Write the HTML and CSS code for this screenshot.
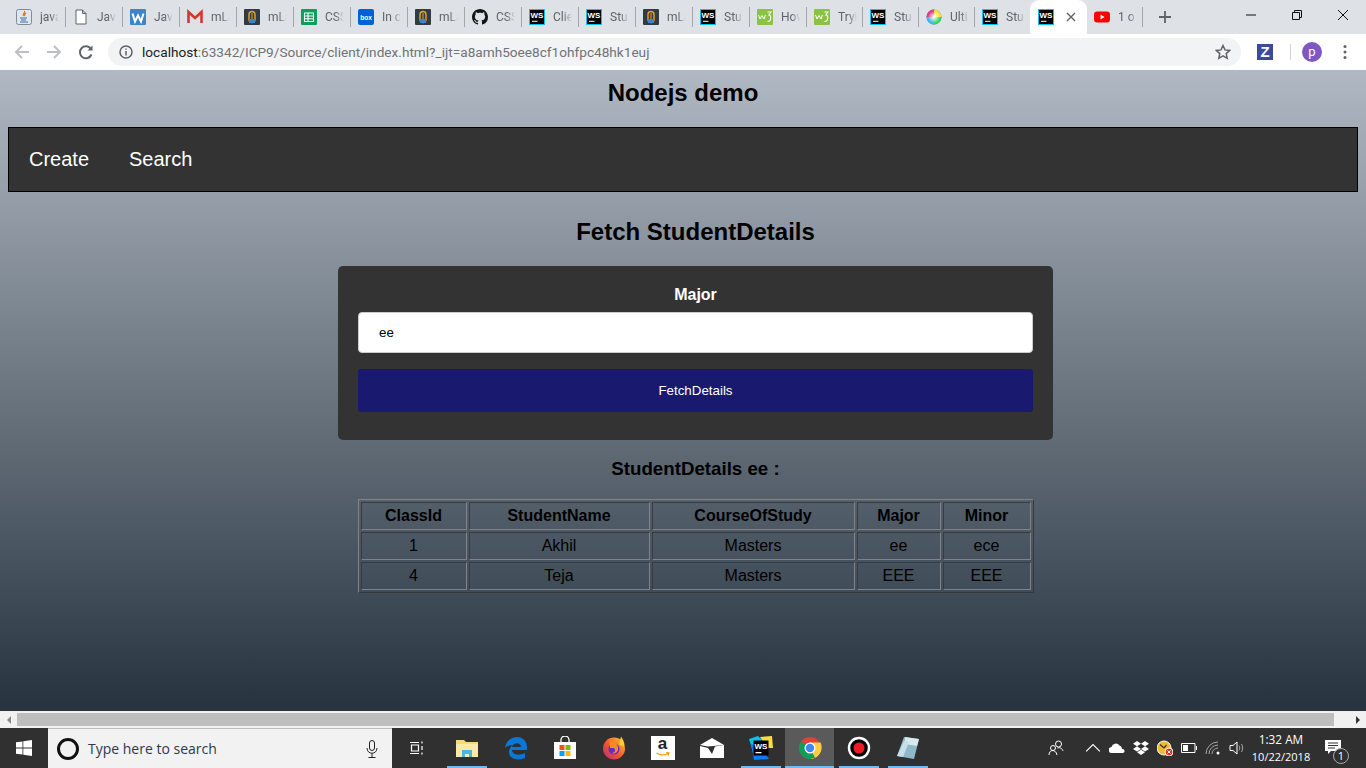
FILE: index.html
```html
<!DOCTYPE html>
<html lang="en">
<head>
<meta charset="utf-8">
<title>Nodejs demo</title>
<link rel="stylesheet" href="styles.css">
</head>
<body>
<svg class="defs" width="0" height="0" aria-hidden="true">
  <symbol id="i-java" viewBox="0 0 16 16"><rect x=".5" y=".5" width="15" height="15" rx="2" fill="#dfe6ee" stroke="#7d8b9a"/><path d="M8.5 2c1 2-2.5 3-1 5M10 4c-1.500 1-2 2-1 3" fill="none" stroke="#e2661a" stroke-width="1.100"/><path d="M4 9h7M5 11h5M4 13h8" stroke="#3f6fa8" stroke-width="1"/></symbol>
  <symbol id="i-doc" viewBox="0 0 16 16"><path d="M3 1h6.500L13 4.500V15H3z M9.500 1v3.500H13" fill="#fff" stroke="#5f6368" stroke-width="1"/></symbol>
  <symbol id="i-w" viewBox="0 0 16 16"><rect width="16" height="16" rx="1" fill="#3d85c6"/><path d="M2.500 4.500l2.500 8 3-6 3 6 2.500-8" fill="none" stroke="#fff" stroke-width="2"/></symbol>
  <symbol id="i-gmail" viewBox="0 0 16 16"><path d="M1.500 14V3l6.500 6 6.500-6v11" fill="none" stroke="#d2392e" stroke-width="2.600"/></symbol>
  <symbol id="i-mlab" viewBox="0 0 16 16"><rect width="16" height="16" rx="1" fill="#323b43"/><rect x="5" y="2.500" width="6" height="11" rx="3" fill="none" stroke="#e6a820" stroke-width="1.400"/><rect x="5" y="10" width="6" height="4" fill="#3f83c9"/><path d="M8 4v6" stroke="#e6a820"/></symbol>
  <symbol id="i-sheets" viewBox="0 0 16 16"><rect width="16" height="16" rx="1" fill="#0f9d58"/><path d="M3.500 4h9v8.500h-9zM3.500 7h9M3.500 9.800h9M7 4v8.500" fill="none" stroke="#fff" stroke-width="1.100"/></symbol>
  <symbol id="i-box" viewBox="0 0 16 16"><rect width="16" height="16" rx="2" fill="#0061d5"/><text x="8" y="11" text-anchor="middle" class="t-box">box</text></symbol>
  <symbol id="i-gh" viewBox="0 0 16 16"><path fill="#161514" d="M8 0C3.580 0 0 3.580 0 8c0 3.540 2.290 6.530 5.470 7.590.4.070.55-.17.55-.38 0-.19-.01-.82-.01-1.490-2.010.37-2.530-.49-2.690-.94-.09-.23-.48-.94-.82-1.130-.28-.15-.68-.52-.01-.53.63-.01 1.080.58 1.230.82.720 1.210 1.870.87 2.330.66.070-.52.280-.87.510-1.070-1.780-.2-3.640-.89-3.640-3.950 0-.87.310-1.590.820-2.150-.08-.2-.36-1.020.08-2.120 0 0 .67-.21 2.200.82.640-.18 1.320-.27 2-.27s1.360.09 2 .27c1.530-1.040 2.200-.82 2.200-.82.44 1.100.16 1.920.08 2.120.51.560.82 1.270.82 2.150 0 3.070-1.870 3.750-3.650 3.950.29.25.54.73.54 1.480 0 1.070-.01 1.930-.01 2.200 0 .21.15.46.55.38A8.010 8.010 0 0 0 16 8c0-4.420-3.580-8-8-8z"/></symbol>
  <symbol id="i-ws" viewBox="0 0 16 16"><rect width="16" height="16" fill="#07c3f2"/><rect x="1" y="1" width="14" height="14" fill="#000"/><text x="8" y="8.500" text-anchor="middle" class="t-ws">WS</text><rect x="3" y="11.800" width="5.500" height="1" fill="#fff"/></symbol>
  <symbol id="i-w3" viewBox="0 0 16 16"><rect width="16" height="16" rx="1" fill="#8ac343"/><path d="M1.500 6l1.500 4 2-3.500 2 3.500 1.500-4" fill="none" stroke="#fff" stroke-width="1"/><path d="M10.500 3h3.500l-2 3c2.500 0 2.500 7-1.500 6.500" fill="none" stroke="#fff" stroke-width="1.100"/></symbol>
  <symbol id="i-wheel" viewBox="0 0 16 16"><defs><radialGradient id="gw"><stop offset="0" stop-color="#fff"/><stop offset="1" stop-color="#fff" stop-opacity="0"/></radialGradient></defs><circle cx="8" cy="8" r="7.500" fill="#46a"/><path d="M8 8V.5A7.500 7.500 0 0 1 15.500 8z" fill="#f7e03c"/><path d="M8 8h7.500A7.500 7.500 0 0 1 8 15.500z" fill="#3bd46b"/><path d="M8 8v7.500A7.500 7.500 0 0 1 .5 8z" fill="#43b7e8"/><path d="M8 8H.5A7.500 7.500 0 0 1 8 .5z" fill="#d8408f"/><circle cx="8" cy="8" r="6" fill="url(#gw)"/></symbol>
  <symbol id="i-yt" viewBox="0 0 16 16"><rect y="2.500" width="16" height="11" rx="3" fill="#f00"/><path d="M6.500 5.500l4 2.500-4 2.500z" fill="#fff"/></symbol>
</svg>

<header class="tabstrip">
  <div class="tab"><svg class="fav"><use href="#i-java"/></svg><span class="tab-t">java</span></div>
  <div class="tab"><svg class="fav"><use href="#i-doc"/></svg><span class="tab-t">Java</span></div>
  <div class="tab"><svg class="fav"><use href="#i-w"/></svg><span class="tab-t">Java</span></div>
  <div class="tab"><svg class="fav"><use href="#i-gmail"/></svg><span class="tab-t">mLa</span></div>
  <div class="tab"><svg class="fav"><use href="#i-mlab"/></svg><span class="tab-t">mLa</span></div>
  <div class="tab"><svg class="fav"><use href="#i-sheets"/></svg><span class="tab-t">CSS</span></div>
  <div class="tab"><svg class="fav"><use href="#i-box"/></svg><span class="tab-t">In c</span></div>
  <div class="tab"><svg class="fav"><use href="#i-mlab"/></svg><span class="tab-t">mLa</span></div>
  <div class="tab"><svg class="fav"><use href="#i-gh"/></svg><span class="tab-t">CSS</span></div>
  <div class="tab"><svg class="fav"><use href="#i-ws"/></svg><span class="tab-t">Clie</span></div>
  <div class="tab"><svg class="fav"><use href="#i-ws"/></svg><span class="tab-t">Stu</span></div>
  <div class="tab"><svg class="fav"><use href="#i-mlab"/></svg><span class="tab-t">mLa</span></div>
  <div class="tab"><svg class="fav"><use href="#i-ws"/></svg><span class="tab-t">Stu</span></div>
  <div class="tab"><svg class="fav"><use href="#i-w3"/></svg><span class="tab-t">How</span></div>
  <div class="tab tab-n"><svg class="fav"><use href="#i-w3"/></svg><span class="tab-t">Tryi</span></div>
  <div class="tab tab-n"><svg class="fav"><use href="#i-ws"/></svg><span class="tab-t">Stu</span></div>
  <div class="tab tab-n"><svg class="fav"><use href="#i-wheel"/></svg><span class="tab-t">Ulti</span></div>
  <div class="tab tab-n tab-pre"><svg class="fav"><use href="#i-ws"/></svg><span class="tab-t">Stu</span></div>
  <div class="tab tab-active"><svg class="fav"><use href="#i-ws"/></svg>
    <svg class="tab-x" viewBox="0 0 10 10"><path d="M1 1l8 8M9 1l-8 8"/></svg></div>
  <div class="tab tab-n"><svg class="fav"><use href="#i-yt"/></svg><span class="tab-t">1 o</span></div>
  <svg class="newtab" viewBox="0 0 12 12"><path d="M6 0v12M0 6h12"/></svg>
  <div class="winctl">
    <div class="winbtn"><svg viewBox="0 0 10 10"><path d="M0 5h10"/></svg></div>
    <div class="winbtn"><svg viewBox="0 0 10 10"><path d="M.5 2.500h7v7h-7zM2.500 2.500v-2h7v7h-2"/></svg></div>
    <div class="winbtn"><svg viewBox="0 0 10 10"><path d="M0 0l10 10M10 0L0 10"/></svg></div>
  </div>
</header>

<div class="toolbar">
  <svg class="navi navi-off" viewBox="0 0 16 16"><path d="M15 8H2M8 2L2 8l6 6"/></svg>
  <svg class="navi navi-off" viewBox="0 0 16 16"><path d="M1 8h13M8 2l6 6-6 6"/></svg>
  <svg class="navi navi-on" viewBox="0 0 16 16"><path d="M13.500 10.500A6 6 0 1 1 13 5"/><path class="fill" d="M14.500 1.500v5h-5z"/></svg>
  <div class="omnibox">
    <svg class="info" viewBox="0 0 14 14"><circle cx="7" cy="7" r="6"/><path d="M7 6v4.500M7 3.500v1.300"/></svg>
    <span class="url"><span class="url-host">localhost</span>:63342/ICP9/Source/client/index.html?_ijt=a8amh5oee8cf1ohfpc48hk1euj</span>
    <svg class="star" viewBox="0 0 16 16"><path d="M8 1.500l2 4.400 4.700.5-3.500 3.200 1 4.700L8 11.900l-4.200 2.400 1-4.700L1.300 6.400 6 5.900z"/></svg>
  </div>
  <div class="ext-z">Z</div>
  <div class="tool-sep"></div>
  <div class="avatar">P</div>
  <svg class="kebab" viewBox="0 0 4 16"><circle cx="2" cy="2.500" r="1.500"/><circle cx="2" cy="8" r="1.500"/><circle cx="2" cy="13.500" r="1.500"/></svg>
</div>

<main class="page">
  <h1 class="site-title">Nodejs demo</h1>
  <nav class="nav"><a class="nav-link">Create</a><a class="nav-link">Search</a></nav>
  <section class="content">
    <h2 class="fetch-title">Fetch StudentDetails</h2>
    <form class="card">
      <label class="card-label" for="major">Major</label>
      <input class="card-input" id="major" type="text" value="ee">
      <button class="card-btn" type="button">FetchDetails</button>
    </form>
    <h3 class="result-title">StudentDetails ee :</h3>
    <table class="results">
      <colgroup><col class="c1"><col class="c2"><col class="c3"><col class="c4"><col class="c5"></colgroup>
      <thead>
        <tr><th>ClassId</th><th>StudentName</th><th>CourseOfStudy</th><th>Major</th><th>Minor</th></tr>
      </thead>
      <tbody>
        <tr><td>1</td><td>Akhil</td><td>Masters</td><td>ee</td><td>ece</td></tr>
        <tr><td>4</td><td>Teja</td><td>Masters</td><td>EEE</td><td>EEE</td></tr>
      </tbody>
    </table>
  </section>
</main>

<div class="hscroll">
  <div class="sb-btn"><span class="arrow-l"></span></div>
  <div class="sb-thumb"></div>
  <div class="sb-btn"><span class="arrow-r"></span></div>
</div>

<footer class="taskbar">
  <div class="start"><svg viewBox="0 0 16 16" class="win"><path d="M0 2.300l6.500-.9v6.200H0zM7.300 1.300L16 0v7.600H7.300zM0 8.400h6.500v6.200L0 13.700zM7.300 8.400H16V16l-8.700-1.300z"/></svg></div>
  <div class="searchbox">
    <span class="cortana"></span>
    <span class="search-t">Type here to search</span>
    <svg class="mic" viewBox="0 0 12 18"><rect x="3.500" y=".5" width="5" height="10" rx="2.500"/><path d="M1 8c0 7 10 7 10 0M6 13.500v3.500M2.500 17.500h7"/></svg>
  </div>
  <div class="taskview"><svg viewBox="0 0 16 16"><path d="M1 2.500h9M1 13.500h9M2.500 5h7v6h-7zM13 1.500v2M13 6v4M13 12.500v2"/></svg></div>

  <div class="task-i run"><svg viewBox="0 0 24 24"><path d="M1 4h8l2 2h12v15H1z" fill="#f6d97a"/><path d="M1 8h22v13H1z" fill="#fbe9a9"/><path d="M7 14h10v7h-3v-3h-4v3H7z" fill="#4db4e6"/></svg></div>
  <div class="task-i"><svg viewBox="0 0 24 24"><path d="M1 12C2 4 8 1 13 1c6 0 10 4 10 11v2H8c0 5 8 6 13 3v5c-7 3-16 1-16-6 0-3 2-6 4-7-3 0-6 1-8 3zm7-1h9c0-5-8-5-9 0z" fill="#0a78d7"/></svg></div>
  <div class="task-i"><svg viewBox="0 0 24 24"><path d="M8 6V4a4 4 0 0 1 8 0v2" fill="none" stroke="#fff" stroke-width="1.300"/><path d="M1 6h22v17H1z" fill="#fff"/><rect x="6.500" y="9" width="5" height="5" fill="#f25022"/><rect x="12.500" y="9" width="5" height="5" fill="#7fba00"/><rect x="6.500" y="15" width="5" height="5" fill="#00a4ef"/><rect x="12.500" y="15" width="5" height="5" fill="#ffb900"/></svg></div>
  <div class="task-i"><svg viewBox="0 0 24 24"><defs><linearGradient id="ff" x1="1" y1="0" x2="0" y2="1"><stop offset="0" stop-color="#ffcb2d"/><stop offset=".55" stop-color="#f5552a"/><stop offset="1" stop-color="#b3268c"/></linearGradient></defs><circle cx="12" cy="12.500" r="11" fill="url(#ff)"/><path d="M19 .5c2 3 4 6 3 10l-5-2z" fill="#ffcb2d"/><circle cx="12" cy="13" r="5.500" fill="#6a2bc4"/><path d="M8 6c4-1 9 2 8 8-1 3-4 4-6 3 3 0 4-3 2-5H8z" fill="#f98b23"/></svg></div>
  <div class="task-i"><div class="amazon"><span class="amazon-a">a</span><svg viewBox="0 0 20 6" class="smile"><path d="M2 1c4 3 10 3 15 .5M14 .5l3.500.5-1 3"/></svg></div></div>
  <div class="task-i"><svg viewBox="0 0 24 20"><path d="M0 7L12 0l12 7-16 1.500z" fill="#fff"/><path d="M0 8l8 2 4 6 3-7.500 9-1.500v13H0z" fill="#fff"/></svg></div>
  <div class="task-i run"><svg viewBox="0 0 24 24"><path d="M0 3l9-3 4 4-9 12z" fill="#07c3f2"/><path d="M11 1l12-1 1 12-6 0z" fill="#f7e03c"/><path d="M2 8l10 4 8 11-15 1z" fill="#087cfa"/><rect x="4.500" y="4.500" width="15" height="15" fill="#000"/><text x="12" y="12.500" text-anchor="middle" class="t-wsb">WS</text><rect x="6.500" y="16" width="6" height="1.300" fill="#fff"/></svg></div>
  <div class="task-i run task-active"><svg viewBox="0 0 24 24"><circle cx="12" cy="12" r="11" fill="#db4437"/><path d="M12 12L2.500 17.500A11 11 0 0 1 3 5.500z" fill="#0f9d58"/><path d="M12 12l0 11A11 11 0 0 1 2.500 17.500z" fill="#0f9d58"/><path d="M12 12h11A11 11 0 0 1 12 23z" fill="#ffcd40"/><path d="M12 12L6.500 21.500 12 23l5.500-1.500z" fill="#0f9d58"/><path d="M12 6.500h10.500a11 11 0 0 1-5.500 15L12 12z" fill="#ffcd40"/><circle cx="12" cy="12" r="5.500" fill="#fff"/><circle cx="12" cy="12" r="4.200" fill="#4285f4"/></svg></div>
  <div class="task-i run"><svg viewBox="0 0 24 24"><circle cx="12" cy="12" r="10" fill="#000" stroke="#fff" stroke-width="2.400"/><circle cx="12" cy="12" r="5.500" fill="#ed1c24"/></svg></div>
  <div class="task-i run"><svg viewBox="0 0 24 24"><path d="M8 1l15 2-5 20L1 20z" fill="#8fb9c9"/><path d="M9 1l14 2-2 7-12-2z" fill="#d7e8ee"/><path d="M1 20L8 5l5 1-6 15z" fill="#c6dfe9"/></svg></div>

  <div class="tray">
    <div class="people"><svg viewBox="0 0 16 16"><circle cx="10.500" cy="4" r="3"/><circle cx="5" cy="8" r="2.500"/><path d="M1 15c0-6 7-6 8 0M9.500 8c3-1 5 1 5.500 3"/></svg></div>
    <div class="tray-i"><svg viewBox="0 0 14 8"><path d="M1 7l6-6 6 6"/></svg></div>
    <div class="tray-i"><svg viewBox="0 0 16 10"><path class="fill" d="M3 10a3 3 0 0 1-.5-6 4.500 4.500 0 0 1 8-1.500A3.500 3.500 0 0 1 13 6a2 2 0 0 1 1 4z"/></svg></div>
    <div class="tray-i"><svg viewBox="0 0 16 14"><path class="fill" d="M4 0L0 2.700l4 2.600L8 2.700zM12 0L8 2.700l4 2.600 4-2.600zM0 7.900l4 2.600L8 7.900 4 5.300zM12 5.300L8 7.900l4 2.600 4-2.600zM4 11.300L8 14l4-2.700-4-2.500z"/></svg></div>
    <div class="tray-i"><svg viewBox="0 0 16 16"><circle cx="7" cy="8" r="7" fill="#f2b933"/><path d="M7 8L3 4.500M7 8l2.500-3" stroke="#333" stroke-width="1.200"/><circle cx="12" cy="12" r="4" fill="#d5321f"/><path d="M10.500 10.500l3 3M13.500 10.500l-3 3" stroke="#fff"/></svg></div>
    <div class="tray-i"><svg viewBox="0 0 16 10"><path d="M.5.500h13.500v9H.5zM15.500 3v4"/><rect class="fill" x="2" y="2" width="5" height="6"/></svg></div>
    <div class="tray-i"><svg viewBox="0 0 16 16"><path d="M1 14a12 12 0 0 1 12-12M4 14a9 9 0 0 1 9-9M7 14a6 6 0 0 1 6-6" class="dim"/><circle class="fill" cx="13" cy="13" r="1.500"/></svg></div>
    <div class="tray-i"><svg viewBox="0 0 16 14"><path d="M1 4.500h3L8 1v12L4 9.500H1z"/><path d="M10 4.500c1 1.500 1 3.500 0 5M12.500 3c1.500 2.500 1.500 5.500 0 8" class="dim"/></svg></div>
    <div class="clock"><span class="clock-t">1:32 AM</span><span class="clock-d">10/22/2018</span></div>
    <div class="notif"><svg viewBox="0 0 16 14"><path class="fill" d="M0 0h16v11H6l-3 3v-3H0z"/><path class="ink" d="M3 3h10M3 5.500h10M3 8h7"/></svg><span class="notif-n">1</span></div>
  </div>
</footer>
</body>
</html>
```

FILE: styles.css
```css
* { box-sizing: border-box; }
html, body { margin: 0; padding: 0; }
body {
  width: 1366px; height: 768px; overflow: hidden;
  display: flex; flex-direction: column;
  font-family: "Liberation Sans", Arial, sans-serif;
}
.defs { position: absolute; }
.t-box { font: bold 6.500px "Liberation Sans", sans-serif; fill: #fff; }
.t-ws { font: bold 8px "Liberation Sans", sans-serif; fill: #fff; }
.t-wsb { font: bold 8px "Liberation Sans", sans-serif; fill: #fff; }

/* tab strip */
.tabstrip { height: 34px; background: #dee1e6; display: flex; padding-left: 9px; flex: none; }
.tab {
  width: 57px; height: 20px; margin-top: 7px; flex: none;
  display: flex; align-items: center; padding-left: 7px;
  border-right: 1px solid #a3a6ab;
}
.tab-n { width: 56px; }
.tab-pre { border-right: 0; }
.tab-active {
  height: 34px; margin: 0 0 0 -1px; border: 0; background: #fff;
  border-radius: 9px 9px 0 0;
  align-items: flex-start; padding-top: 9px; padding-left: 8px;
}
.fav { width: 16px; height: 16px; flex: none; }
.tab-t {
  margin-left: 8px; width: 19px; overflow: hidden; white-space: nowrap;
  font: 12px Roboto, sans-serif; color: #5f6368;
  -webkit-mask-image: linear-gradient(90deg, #000 55%, transparent);
  mask-image: linear-gradient(90deg, #000 55%, transparent);
}
.tab-x { width: 10px; height: 10px; margin: 3px 0 0 12px; fill: none; stroke: #5f6368; stroke-width: 1.400; }
.newtab { width: 12px; height: 12px; margin: 11px 0 0 16px; fill: none; stroke: #5f6368; stroke-width: 1.800; flex: none; }
.winctl { margin-left: auto; display: flex; }
.winbtn { width: 46px; height: 30px; display: flex; align-items: center; justify-content: center; }
.winbtn svg { width: 10px; height: 10px; fill: none; stroke: #111; stroke-width: 1; }

/* toolbar */
.toolbar { height: 36px; background: #fff; display: flex; align-items: center; flex: none; padding-left: 14px; }
.navi { width: 16px; height: 16px; flex: none; fill: none; stroke-width: 2; margin-right: 16px; }
.navi-off { stroke: #bcbfc3; }
.navi-on { stroke: #5f6368; margin-right: 14px; }
.navi-on .fill { fill: #5f6368; stroke: none; }
.omnibox {
  width: 1133px; height: 28px; border-radius: 14px; background: #f1f3f4; flex: none;
  display: flex; align-items: center; padding-left: 11px;
}
.info { width: 14px; height: 14px; fill: none; stroke: #5f6368; stroke-width: 1.500; flex: none; }
.url { margin-left: 9px; font: 13.640px Roboto, sans-serif; color: #6f7377; white-space: nowrap; }
.url-host { color: #202124; }
.star { width: 16px; height: 16px; margin-left: auto; margin-right: 10px; fill: none; stroke: #5f6368; stroke-width: 1.500; flex: none; }
.ext-z {
  width: 16px; height: 16px; margin-left: 16px; background: #3b4a9c; color: #fff; flex: none;
  font: bold 15px/16px "Liberation Sans", sans-serif; text-align: center;
}
.tool-sep { width: 1px; height: 16px; background: #d0d2d4; margin-left: 17px; flex: none; }
.avatar {
  width: 20px; height: 20px; border-radius: 50%; background: #7e57c2; color: #fff; flex: none;
  margin-left: 11px; font: 13px/19px Roboto, sans-serif; text-align: center; text-transform: lowercase;
}
.kebab { width: 4px; height: 16px; margin-left: 21px; fill: #5f6368; flex: none; }

/* page */
.page {
  height: 641px; flex: none; overflow: hidden; padding: 9px 8px 0;
  background: linear-gradient(#b0b8c3, #26333e);
}
.site-title { margin: 0 0 21px; font-size: 24px; line-height: 27px; font-weight: bold; text-align: center; color: #000; }
.nav { height: 65px; background: #333; border: 1px solid #000; display: flex; align-items: center; }
.nav-link { color: #fff; font-size: 20px; padding: 0 20px; }
.content { margin-left: 25px; padding-top: 26px; }
.fetch-title { margin: 0 0 21px; font-size: 24px; line-height: 27px; text-align: center; color: #000; }
.card {
  width: 715px; height: 174px; margin: 0 auto; padding: 20px 20px 0; background: #333; border-radius: 5px;
  display: flex; flex-direction: column;
}
.card-label { color: #fff; font-size: 16px; line-height: 18px; font-weight: bold; text-align: center; margin-bottom: 8px; }
.card-input {
  height: 41px; padding: 0 20px; background: #fff; border: 1px solid #ccc; border-radius: 4px;
  font: 13.330px "Liberation Sans", sans-serif; color: #000; margin: 0; width: 100%;
}
.card-btn {
  height: 43px; margin-top: 16px; background: #191970; border: 0; border-radius: 3px; color: #fff;
  font: 13.330px "Liberation Sans", sans-serif; width: 100%;
}
.result-title { margin: 18px 0 19px; font-size: 18.720px; line-height: 22px; text-align: center; color: #000; }
.results {
  width: 676px; margin: 0 auto; table-layout: fixed; border-collapse: separate; border-spacing: 2px;
  border: 1px solid; border-color: #808488 #33393f #33393f #808488; color: #000;
}
.c1 { width: 106px; } .c2 { width: 181px; } .c3 { width: 203px; } .c4 { width: 84px; } .c5 { width: 88px; }
.results th, .results td {
  height: 28px; padding: 1px; text-align: center; font-size: 16px;
  border: 1px solid; border-color: #363c42 #808488 #808488 #363c42;
}

/* scrollbar */
.hscroll { height: 17px; flex: none; background: #f1f1f1; display: flex; align-items: stretch; padding: 2px 0; }
.sb-btn { width: 17px; flex: none; display: flex; align-items: center; justify-content: center; }
.sb-thumb { flex: 1; background: #bebebe; margin-right: 15px; }
.arrow-l, .arrow-r { width: 0; height: 0; border: 4px solid transparent; }
.arrow-l { border-right-color: #8a8a8a; border-left: 0; }
.arrow-r { border-left-color: #333; border-right: 0; }

/* taskbar */
.taskbar { height: 40px; flex: none; background: #303030; display: flex; }
.start { width: 48px; display: flex; align-items: center; justify-content: center; }
.win { width: 16px; height: 16px; fill: #fff; }
.searchbox {
  width: 344px; background: #f2f2f2; display: flex; align-items: center; padding-left: 9px;
  border-top: 1px solid #bdbdbd;
}
.cortana { width: 22px; height: 22px; border-radius: 50%; border: 3px solid #111; flex: none; }
.search-t { margin-left: 9px; font: 14px "Open Sans", sans-serif; color: #2b3a4a; white-space: nowrap; }
.mic { width: 12px; height: 18px; margin-left: auto; margin-right: 14px; fill: none; stroke: #222; stroke-width: 1; }
.taskview { width: 50px; display: flex; align-items: center; justify-content: center; }
.taskview svg { width: 16px; height: 16px; fill: none; stroke: #fff; stroke-width: 1.200; }
.task-i { width: 49px; height: 40px; display: flex; align-items: center; justify-content: center; flex: none; position: relative; }
.task-i > svg { width: 24px; height: 24px; }
.run::after { content: ""; position: absolute; left: 5px; right: 4px; bottom: 0; height: 2px; background: #76b9ed; }
.task-active { background: #5a5a5a; }
.task-active::after { left: 0; right: 0; }
.amazon { width: 24px; height: 24px; background: #fff; display: flex; flex-direction: column; align-items: center; }
.amazon-a { font: bold 17px/16px "Liberation Sans", sans-serif; color: #222; }
.smile { width: 16px; height: 5px; fill: none; stroke: #f90; stroke-width: 1.500; }
.tray { margin-left: auto; display: flex; align-items: center; width: 322px; padding-left: 0; }
.people { width: 24px; margin-right: 13px; display: flex; justify-content: center; }
.people svg { width: 16px; height: 16px; fill: none; stroke: #fff; stroke-width: 1; }
.tray-i { width: 24px; display: flex; justify-content: center; align-items: center; flex: none; }
.tray-i svg { width: 16px; height: 16px; fill: none; stroke: #fff; stroke-width: 1; }
.tray-i .fill { fill: #fff; stroke: none; }
.tray-i .dim { stroke: #a8a8a8; }
.clock {
  width: 64px; display: flex; flex-direction: column; align-items: center;
  line-height: 18px; font-family: "Open Sans", sans-serif; color: #fff; white-space: nowrap;
}
.clock-t { font-size: 11.800px; }
.clock-d { font-size: 11px; }
.notif { width: 42px; margin-left: 5px; position: relative; height: 40px; }
.notif svg { position: absolute; left: 7px; top: 12px; width: 16px; height: 14px; }
.notif .fill { fill: #fff; }
.notif .ink { stroke: #333; stroke-width: 1; }
.notif-n {
  position: absolute; left: 15px; top: 20px; width: 16px; height: 16px; border-radius: 50%;
  background: #303030; border: 1px solid #aaa; color: #fff; font: 11px/14px "Open Sans", sans-serif; text-align: center;
}
```
